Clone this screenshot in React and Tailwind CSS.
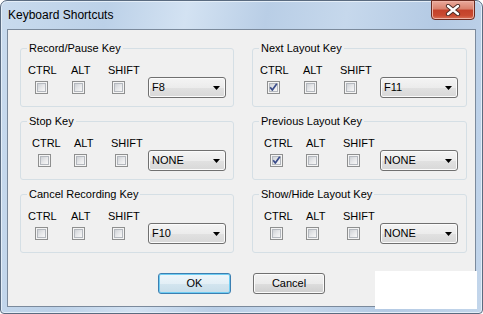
import React from "react";

const Checkbox = ({ checked, className = "" }) => (
  <div className={"relative w-[13px] h-[13px] border border-[#8e8f8f] bg-[#f4f4f4] p-[1px] " + className}>
    <div className="w-full h-full border border-[#b4b8be] bg-[linear-gradient(135deg,#cfd2d6_0%,#e6e7e9_50%,#f7f7f7_100%)]" />
    {checked && (
      <svg className="absolute left-0 top-0" width="11" height="11" viewBox="0 0 11 11">
        <path d="M2.2 5.2 L4.3 8 L8.8 1.8" stroke="#3a4c8a" strokeWidth="1.7" fill="none" strokeLinejoin="round" />
      </svg>
    )}
  </div>
);

const Dropdown = ({ value }) => (
  <div className="w-[78px] h-[21px] rounded-[3px] border border-[#707070] bg-[linear-gradient(#f4f4f4_0%,#ececec_50%,#e1e1e1_52%,#d8d8d8_100%)] shadow-[inset_0_0_0_1px_#fbfbfb] flex items-center pl-[3px] pr-[5px] text-[11px] leading-[13px] text-black">
    <span>{value}</span>
    <svg className="ml-auto" width="7" height="4" viewBox="0 0 7 4">
      <path d="M0 0H7L3.5 4Z" fill="#000" />
    </svg>
  </div>
);

const Group = ({ title, checked, value, shifted }) => (
  <div className="relative h-[59px] rounded-[3px] border border-[#d5dfe5]">
    <div className="absolute left-[6px] top-[-7px] px-[2px] bg-[#f0f0f0] text-[11px] leading-[13px] text-black whitespace-nowrap">
      {title}
    </div>
    <div className={"flex items-start pt-[14px] " + (shifted ? "pl-[11px]" : "pl-[7px]")}>
      <div className={"flex flex-col " + (shifted ? "w-[42px]" : "w-[43px]")}>
        <span className="text-[11px] leading-[14px]">CTRL</span>
        <Checkbox checked={checked} className={"mt-[4px] " + (shifted ? "ml-[6px]" : "ml-[7px]")} />
      </div>
      <div className={"flex flex-col " + (shifted ? "w-[37px]" : "w-[37px]")}>
        <span className="text-[11px] leading-[14px]">ALT</span>
        <Checkbox className={"mt-[4px] " + (shifted ? "ml-[0px]" : "ml-[1px]")} />
      </div>
      <div className={"flex flex-col " + (shifted ? "w-[37px]" : "w-[40px]")}>
        <span className="text-[11px] leading-[14px]">SHIFT</span>
        <Checkbox className="mt-[4px] ml-[4px]" />
      </div>
      <div className="mt-[14px]">
        <Dropdown value={value} />
      </div>
    </div>
  </div>
);

export default function App() {
  return (
    <div className="relative w-[483px] h-[314px] bg-white font-['Liberation_Sans',Arial,sans-serif] text-black overflow-hidden">
      <div className="w-full h-full flex flex-col rounded-t-[7px] rounded-b-[4px] border border-[#5a6b80] bg-[linear-gradient(100deg,#c9dbee_0%,#bcd1e8_20%,#d3e2f2_35%,#b9cee6_50%,#c6d8ec_65%,#b4cae4_82%,#c3d6eb_100%)] shadow-[inset_0_0_0_1px_#e4eef8]">
        <div className="relative h-[28px] flex items-start shrink-0">
          <span className="pl-[7px] pt-[6px] text-[12px] leading-[16px] text-black font-['Liberation_Sans',sans-serif]">
            Keyboard Shortcuts
          </span>
          <div className="ml-auto mr-[7px] mt-[-1px] w-[44px] h-[20px] rounded-b-[4px] border border-[#6b2a1f] bg-[linear-gradient(#e9a99b_0%,#d9806c_45%,#c3412a_50%,#c94a31_80%,#d9735a_100%)] shadow-[inset_0_0_0_1px_#eeb3a6] flex items-center justify-center">
            <svg width="16" height="12" viewBox="0 0 16 12">
              <path d="M3 2 L13 10 M13 2 L3 10" stroke="#4a2a24" strokeWidth="4.2" strokeLinecap="round" />
              <path d="M3 2 L13 10 M13 2 L3 10" stroke="#ffffff" strokeWidth="2.4" strokeLinecap="round" />
            </svg>
          </div>
        </div>
        <div className="flex-1 mx-[6px] mb-[6px] border border-[#7b8a9c] bg-[#f0f0f0] flex flex-col pt-[18px] pl-[12px]">
          <div className="grid grid-cols-[214px_215px] gap-x-[18px]">
            <div className="flex flex-col gap-[14px]">
              <Group title="Record/Pause Key" value="F8" />
              <Group title="Stop Key" value="NONE" shifted />
              <Group title="Cancel Recording Key" value="F10" />
            </div>
            <div className="flex flex-col gap-[14px]">
              <Group title="Next Layout Key" value="F11" checked />
              <Group title="Previous Layout Key" value="NONE" checked shifted />
              <Group title="Show/Hide Layout Key" value="NONE" shifted />
            </div>
          </div>
          <div className="flex pl-[138px] mt-[20px] gap-[22px]">
            <div className="w-[73px] h-[21px] rounded-[3px] border border-[#3c7fb1] bg-[linear-gradient(#eef6fa_0%,#e3eff6_50%,#d3e5ef_52%,#c8dde9_100%)] shadow-[inset_0_0_0_1px_#6fcdf3] flex items-center justify-center text-[11px]">
              OK
            </div>
            <div className="w-[72px] h-[21px] rounded-[3px] border border-[#707070] bg-[linear-gradient(#f2f2f2_0%,#ebebeb_50%,#dddddd_52%,#cfcfcf_100%)] shadow-[inset_0_0_0_1px_#fbfbfb] flex items-center justify-center text-[11px]">
              Cancel
            </div>
          </div>
        </div>
      </div>
      <div className="absolute left-[375px] top-[271px] w-[102px] h-[38px] bg-white" />
    </div>
  );
}
